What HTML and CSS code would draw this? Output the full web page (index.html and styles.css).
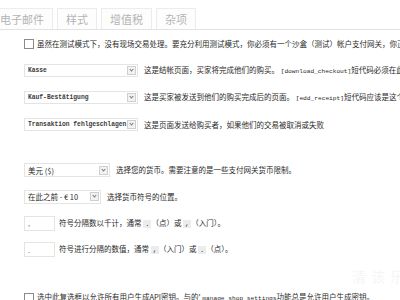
FILE: index.html
```html
<!DOCTYPE html>
<html>
<head>
  <title>商店设置</title>
  <link rel="stylesheet" href="styles.css">
</head>
<body>
  <div id="settings">
    <div class="tabs">
      <span class="tab">电子邮件</span>
      <span class="tab">样式</span>
      <span class="tab">增值税</span>
      <span class="tab">杂项</span>
    </div>

    <div class="row">
      <span class="check"></span>
      <span class="desc">虽然在测试模式下，没有现场交易处理。要充分利用测试模式，你必须有一个沙盒（测试）帐户支付网关，你正在使用。</span>
    </div>

    <div class="group">
      <div class="row">
        <span class="select page"><span class="value">Kasse</span><span class="arrow"></span></span>
        <span class="desc">这是结帐页面，买家将完成他们的购买。 <code>[download_checkout]</code>短代码必须在此页面上。</span>
      </div>
      <div class="row">
        <span class="select page"><span class="value">Kauf-Bestätigung</span><span class="arrow"></span></span>
        <span class="desc">这是买家被发送到他们的购买完成后的页面。 <code>[edd_receipt]</code>短代码应该是这个页面上。</span>
      </div>
      <div class="row">
        <span class="select page"><span class="value">Transaktion fehlgeschlagen</span><span class="arrow"></span></span>
        <span class="desc">这是页面发送给购买者，如果他们的交易被取消或失败</span>
      </div>
    </div>

    <div class="group currency">
      <div class="row tight">
        <span class="select money"><span class="value cjk">美元 ($)</span><span class="arrow"></span></span>
        <span class="desc">选择您的货币。需要注意的是一些支付网关货币限制。</span>
      </div>
      <div class="row tight">
        <span class="select place"><span class="value cjk">在此之前 - € 10</span><span class="arrow"></span></span>
        <span class="desc">选择货币符号的位置。</span>
      </div>
      <div class="row tight">
        <span class="field">,</span>
        <span class="desc">符号分隔数以千计，通常 <code class="mark">.</code>（点）或 <code class="mark">,</code>（入门）。</span>
      </div>
      <div class="row tight">
        <span class="field">.</span>
        <span class="desc">符号进行分隔的数值，通常 <code class="mark">,</code>（入门）或 <code class="mark">.</code>（点）。</span>
      </div>
    </div>

    <div class="row last">
      <span class="check"></span>
      <span class="desc">选中此复选框以允许所有用户生成API密钥。与的' <code class="plain">manage_shop_settings</code>功能总是允许用户生成密钥。</span>
    </div>

    <div class="watermark">清 该 乐IT博</div>
  </div>
</body>
</html>
```

FILE: styles.css
```css
/* shop settings page */
body {
  margin: 0;
  background-color: #fff;
  font-family: "Noto Sans CJK SC", "DejaVu Sans", sans-serif;
  color: #2a2a2a;
  overflow: hidden;
}
#settings {
  position: relative;
  width: 400px;
  height: 300px;
  overflow: hidden;
}
.tabs {
  display: flex;
  gap: 4px;
  height: 21px;
  margin-top: 8px;
  margin-left: -9px;
  border-bottom: 1px solid #e2e2e2;
}
.tab {
  display: flex;
  align-items: center;
  padding: 0 8px;
  border: 1px solid #ececec;
  border-bottom: none;
  background-color: #fdfdfd;
  color: #b4b4b4;
  font-size: 11px;
}
.row {
  display: flex;
  align-items: center;
  height: 27px;
  padding-left: 24px;
  white-space: nowrap;
}
.row.tight {
  height: 26.5px;
}
.currency {
  margin-top: 19px;
}
.row.last {
  margin-top: 21px;
}
.check {
  width: 8px;
  height: 8px;
  border: 1px solid #8a8a8a;
  background-color: #fff;
  margin-right: 3px;
  flex-shrink: 0;
}
.desc {
  font-size: 7.5px;
  line-height: 10px;
}
code {
  font-family: "Liberation Mono", monospace;
  font-size: 6.2px;
}
code.mark {
  background-color: #ececec;
  padding: 0 2px;
  font-size: 7px;
}
.select {
  display: flex;
  align-items: center;
  justify-content: space-between;
  height: 13px;
  padding-left: 3px;
  padding-right: 1px;
  border: 1px solid #e4e4e4;
  background-color: #fff;
  margin-right: 6px;
  flex-shrink: 0;
  box-sizing: border-box;
}
.select .value {
  font-family: "Liberation Mono", monospace;
  font-size: 6.3px;
  font-weight: bold;
  color: #3a3a3a;
}
.select .value.cjk {
  font-family: "Noto Sans CJK SC", sans-serif;
  font-weight: normal;
  font-size: 7.5px;
  color: #2a2a2a;
}
.page {
  width: 114px;
}
.money {
  width: 86px;
  height: 14px;
}
.place {
  width: 77px;
  height: 14px;
}
.arrow {
  position: relative;
  width: 9px;
  height: 9px;
  margin-left: 1px;
  border: 1px solid #cfcfcf;
  background-color: #f2f2f2;
  box-sizing: border-box;
  flex-shrink: 0;
}
.arrow::after {
  content: "";
  position: absolute;
  left: 2px;
  top: 1px;
  width: 2px;
  height: 2px;
  border-right: 1px solid #777;
  border-bottom: 1px solid #777;
  transform: rotate(45deg);
}
.field {
  display: flex;
  align-items: center;
  width: 31px;
  height: 15px;
  padding-left: 3px;
  border: 1px solid #e4e4e4;
  box-sizing: border-box;
  font-size: 7px;
  color: #777;
  margin-right: 4px;
  flex-shrink: 0;
}
.watermark {
  position: absolute;
  left: 352px;
  top: 266px;
  font-size: 14px;
  color: #f5f5f5;
  white-space: nowrap;
  letter-spacing: 1px;
}
```
